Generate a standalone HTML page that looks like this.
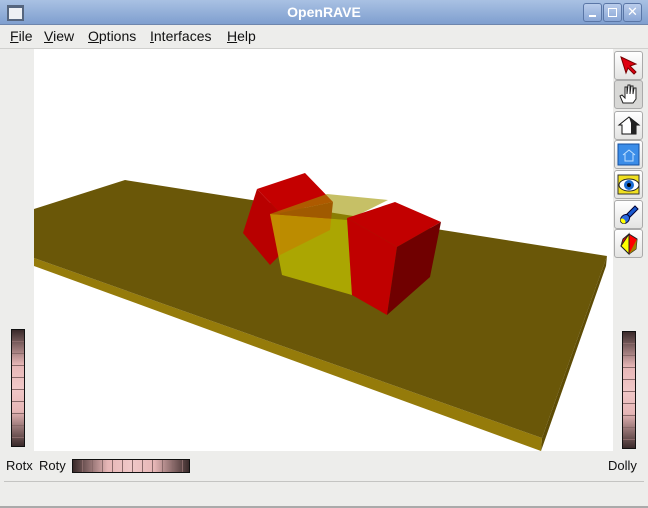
<!DOCTYPE html>
<html><head><style>
body{margin:0;width:648px;height:508px;overflow:hidden;background:#ededeb;font-family:"Liberation Sans","DejaVu Sans",sans-serif;position:relative}
.title{position:absolute;left:0;top:0;width:648px;height:24px;background:linear-gradient(#a9c1e3,#7f9fcf);border-bottom:1px solid #6e86ad}
.title span{position:absolute;left:0;width:648px;text-align:center;top:4px;color:#fff;font-weight:bold;font-size:14px}
.wb{position:absolute;top:3px;width:17px;height:17px;border:1px solid #5a76a6;border-radius:3px;background:linear-gradient(#b9cceb,#8aa7d6)}
.menu{position:absolute;top:28px;font-size:14px;color:#111}
.menu u{text-decoration:underline}
.view{position:absolute;left:34px;top:49px;width:579px;height:402px;background:#fff;overflow:hidden}
.btn{position:absolute;left:614px;width:27px;height:27px;border:1px solid #aaa;border-radius:3px;background:linear-gradient(#fff,#e4e4e2)}
.vs{position:absolute;width:12px;border:1px solid #111;background:repeating-linear-gradient(#0000 0 11px,#8a6a6a 11px 12px),linear-gradient(#3a2a2a,#e6b6b6 30%,#f0c8c8 50%,#e6b6b6 70%,#3a2a2a)}
.hs{position:absolute;height:12px;border:1px solid #111;background:repeating-linear-gradient(90deg,#0000 0 9px,#8a6a6a 9px 10px),linear-gradient(90deg,#3a2a2a,#e6b6b6 30%,#f0c8c8 50%,#e6b6b6 70%,#3a2a2a)}
.lbl{position:absolute;font-size:13px;color:#111}
</style></head><body>
<div class="title"><span>OpenRAVE</span>
<div style="position:absolute;left:7px;top:5px;width:13px;height:11px;border:2px solid #55657e;background:#eef0f4;border-top-width:3px"></div>
<div class="wb" style="left:583px"><div style="position:absolute;left:5px;top:11px;width:7px;height:2px;background:#fff"></div></div>
<div class="wb" style="left:603px"><div style="position:absolute;left:4px;top:4px;width:7px;height:7px;border:1px solid #fff"></div></div>
<div class="wb" style="left:623px"><span style="left:0;width:17px;top:0;font-size:13px">✕</span></div>
</div>
<div class="menu" style="left:10px"><u>F</u>ile</div>
<div class="menu" style="left:44px"><u>V</u>iew</div>
<div class="menu" style="left:88px"><u>O</u>ptions</div>
<div class="menu" style="left:150px"><u>I</u>nterfaces</div>
<div class="menu" style="left:227px"><u>H</u>elp</div>
<div style="position:absolute;left:0;top:48px;width:648px;height:1px;background:#d0d0ce"></div>
<div class="view">
<svg width="579" height="402" viewBox="34 49 579 402" style="position:absolute;left:0;top:0">
<polygon points="34,258 542,438 541,451 34,266" fill="#957b0a"/>
<polygon points="542,438 607,256 606,266 541,451" fill="#5e4c05"/>
<polygon points="34,209 125,180 607,256 542,438 34,258" fill="#6a5708"/>
<polygon points="257,189 305,173 333,202 280,213" fill="#c40000"/>
<polygon points="257,189 280,213 280,255 270,265 243,233" fill="#b80000"/>
<polygon points="280,213 333,202 330,230 280,255" fill="#a00000"/>
<polygon points="270,214 327,194 388,200 348,220" fill="rgba(160,150,0,0.6)"/>
<polygon points="270,214 348,220 352,295 282,275" fill="rgba(200,200,0,0.7)"/>
<polygon points="347,218 395,202 441,222 397,247" fill="#c20000"/>
<polygon points="347,218 397,247 387,315 352,295" fill="#c00000"/>
<polygon points="397,247 441,222 430,277 387,315" fill="#700000"/>
</svg></div>
<div class="btn" style="top:51px"><svg width="27" height="27"><polygon points="6,5 21,12 15,14 21,20 19,22 13,16 11,21" fill="#e00010" stroke="#700" stroke-width="1"/></svg></div>
<div class="btn" style="top:80px;background:#d8d8d6"><svg width="27" height="27"><path d="M8,22 L5,15 L7,14 L10,17 L10,6 L12,6 L12,13 L13,4 L15,4 L15,13 L16,5 L18,5 L18,13 L19,7 L21,7 L21,18 L18,22 Z" fill="#fff" stroke="#222"/></svg></div>
<div class="btn" style="top:111px"><svg width="27" height="27"><polygon points="4,13 14,5 24,13 21,13 21,22 7,22 7,13" fill="#fff" stroke="#111"/><polygon points="14,5 24,13 21,13 21,22 16,22 16,11" fill="#222"/></svg></div>
<div class="btn" style="top:140px"><svg width="27" height="27"><rect x="3" y="3" width="21" height="21" fill="#3b8de8" stroke="#1450a0"/><path d="M8,14 L14,9 L20,14 M10,13 V20 H18 V13" fill="none" stroke="#bfe0ff"/></svg></div>
<div class="btn" style="top:170px"><svg width="27" height="27"><rect x="3" y="4" width="21" height="19" fill="#f0e020" stroke="#333"/><ellipse cx="14" cy="14" rx="10" ry="6" fill="#fff" stroke="#222"/><circle cx="14" cy="14" r="5" fill="#1a6ad0"/><circle cx="14" cy="14" r="2" fill="#000"/></svg></div>
<div class="btn" style="top:200px"><svg width="27" height="27"><path d="M20,5 L23,8 L14,17 L11,14 Z" fill="#1a5ad0" stroke="#003"/><ellipse cx="10" cy="18" rx="5" ry="4" transform="rotate(-45 10 18)" fill="#2a6ae0" stroke="#003"/><ellipse cx="8" cy="20" rx="2" ry="3" transform="rotate(-45 8 20)" fill="#ff0"/></svg></div>
<div class="btn" style="top:229px"><svg width="27" height="27"><polygon points="14,4 22,9 21,19 14,24 6,16 8,9" fill="#f00" stroke="#222"/><polygon points="14,4 6,16 14,24" fill="#ff0" stroke="#222"/><polygon points="14,24 21,19 22,9" fill="#a08000"/></svg></div>
<div class="vs" style="left:11px;top:329px;height:116px"></div>
<div class="vs" style="left:622px;top:331px;height:116px"></div>
<div class="hs" style="left:72px;top:459px;width:116px"></div>
<div class="lbl" style="left:6px;top:458px">Rotx</div>
<div class="lbl" style="left:39px;top:458px">Roty</div>
<div class="lbl" style="left:608px;top:458px">Dolly</div>
<div style="position:absolute;left:4px;top:481px;width:640px;height:1px;background:#c4c4c2"></div>
<div style="position:absolute;left:0;top:506px;width:648px;height:2px;background:#aaa"></div>
</body></html>
